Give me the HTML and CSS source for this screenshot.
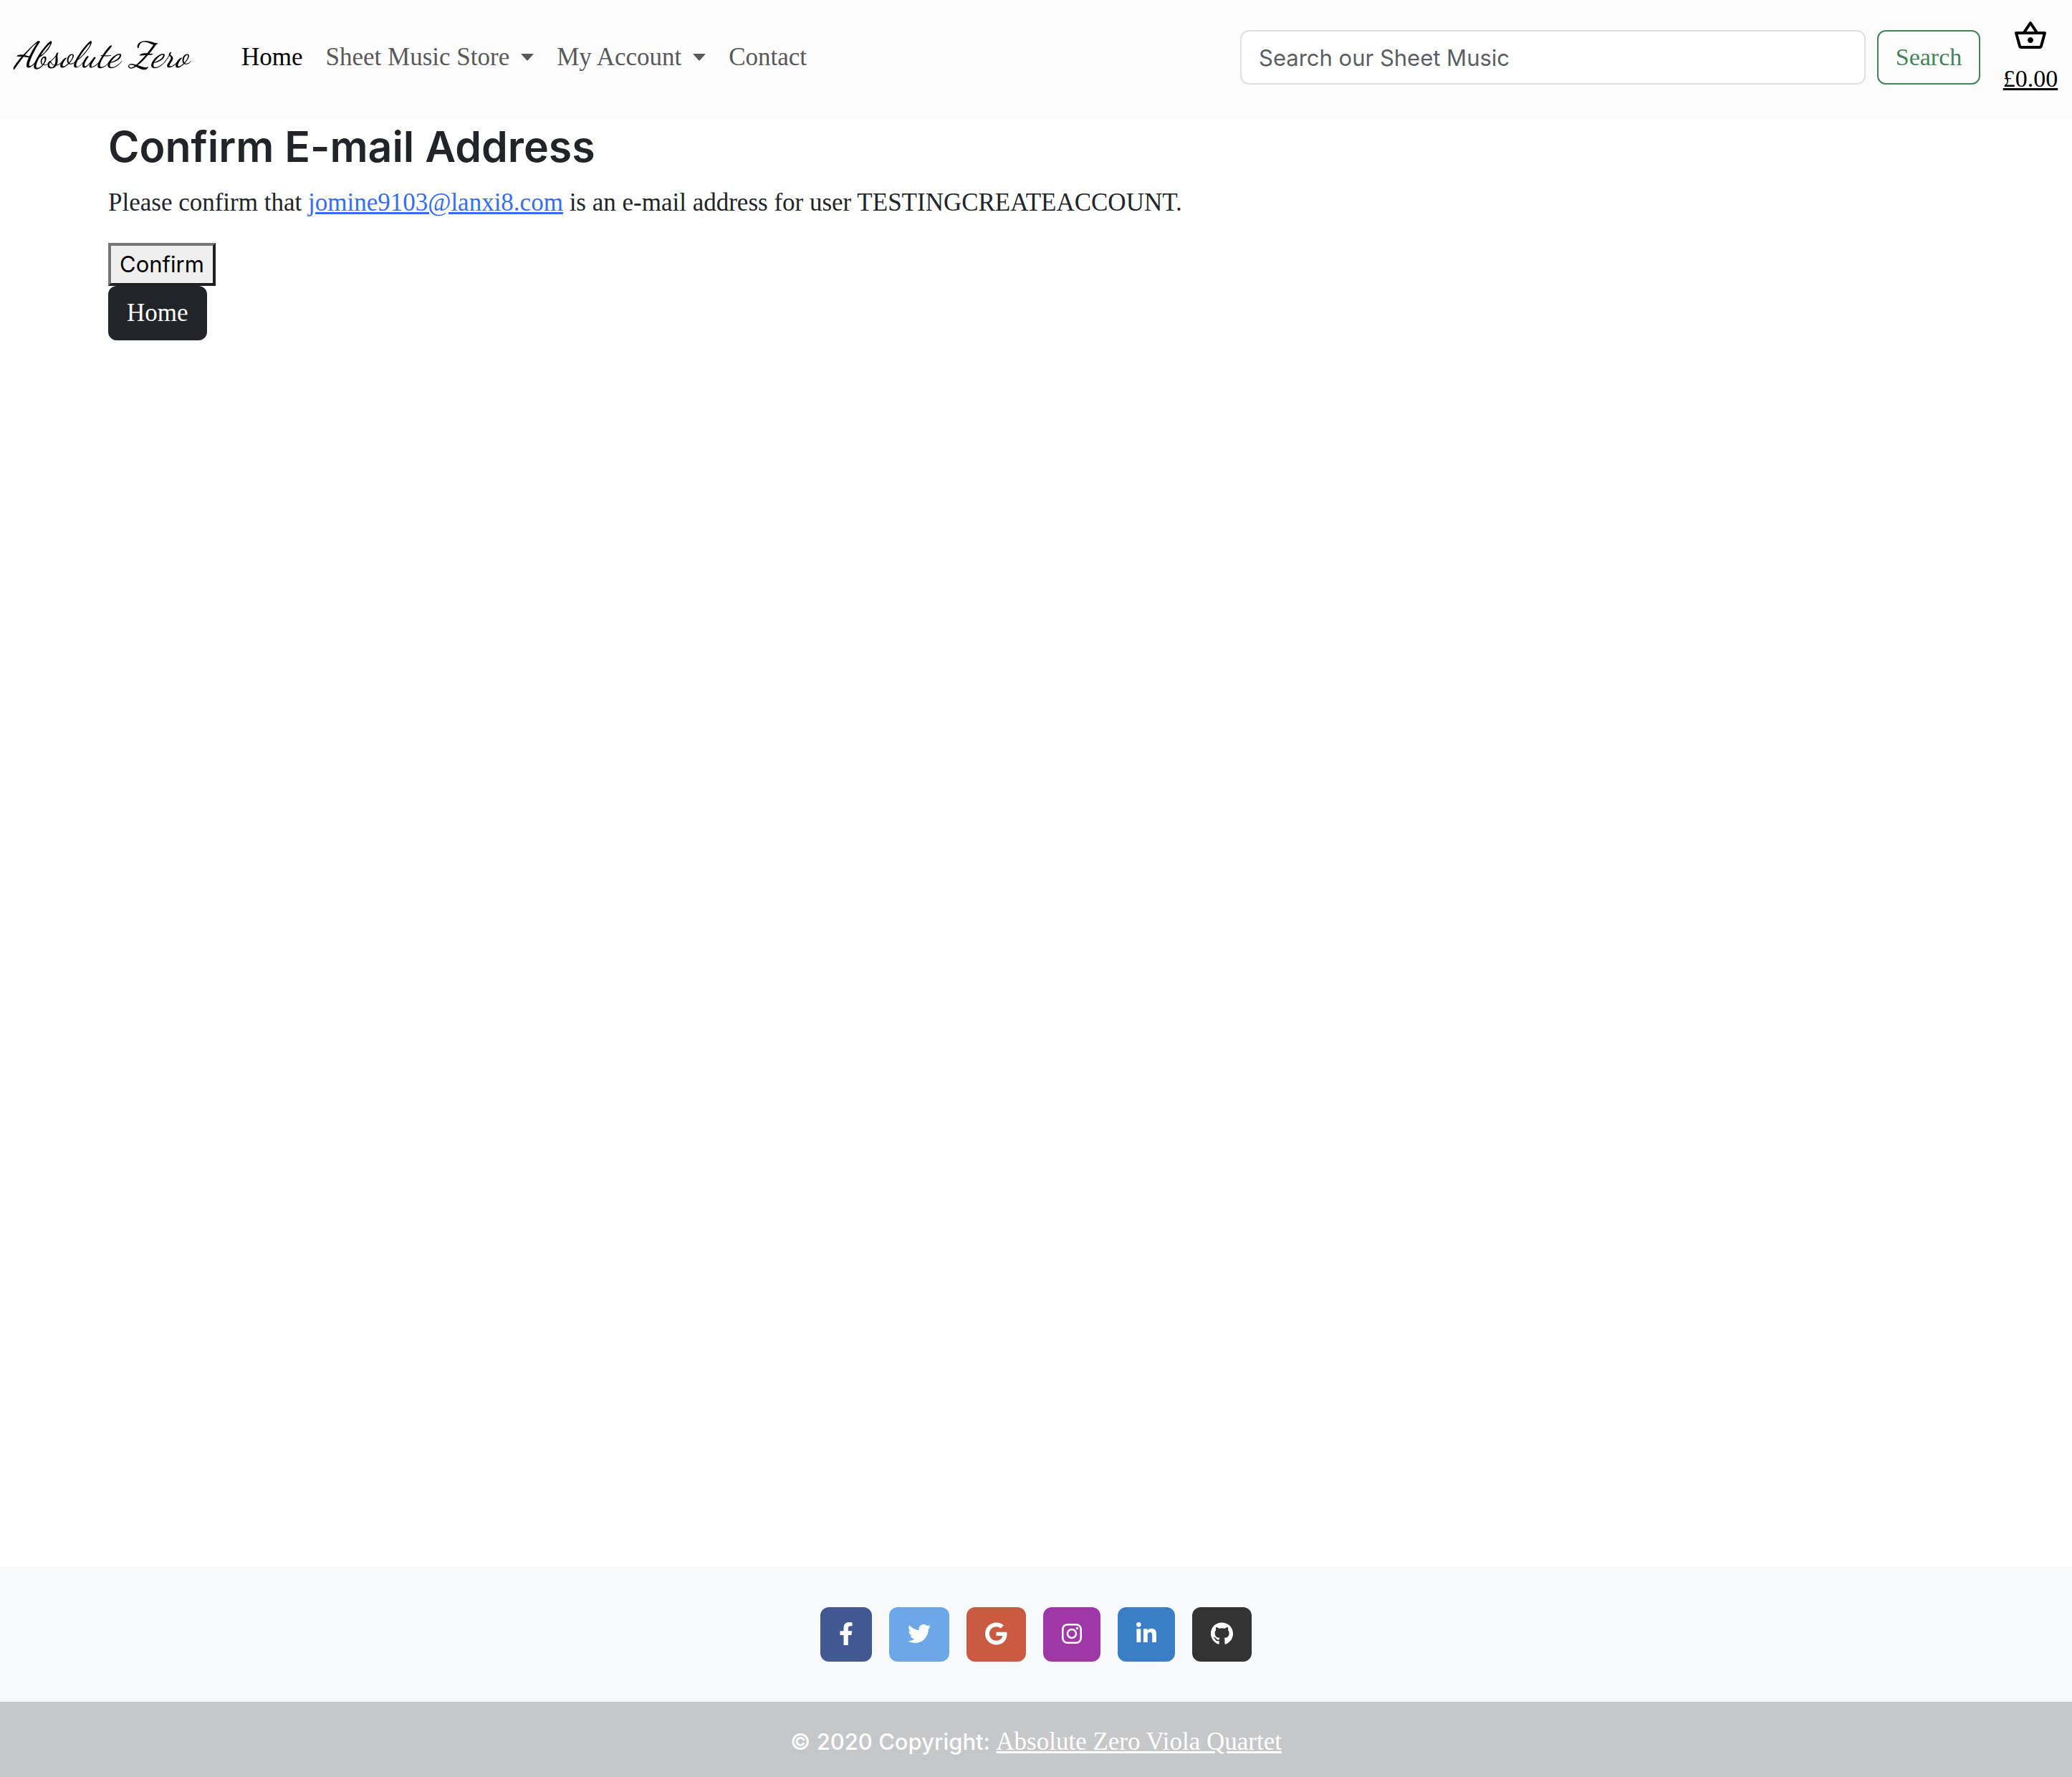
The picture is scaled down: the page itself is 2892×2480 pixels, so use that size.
FILE: index.html
```html
<!DOCTYPE html>
<html lang="en">
<head>
<meta charset="utf-8">
<meta name="viewport" content="width=device-width, initial-scale=1">
<title>Absolute Zero - Confirm E-mail Address</title>
<link rel="stylesheet" href="styles.css">
</head>
<body>
<header class="navbar">
  <a class="brand" href="#">Absolute Zero</a>
  <nav class="nav-main" aria-label="Main">
    <ul class="nav-list">
      <li><a class="nav-link active" href="#">Home</a></li>
      <li><a class="nav-link dropdown" href="#">Sheet Music Store</a></li>
      <li><a class="nav-link dropdown" href="#">My Account</a></li>
      <li><a class="nav-link" href="#">Contact</a></li>
    </ul>
  </nav>
  <form class="search-form">
    <input class="search-input" type="search" placeholder="Search our Sheet Music" aria-label="Search our Sheet Music">
    <button class="btn btn-search" type="submit">Search</button>
  </form>
  <a class="basket" href="#">
    <svg class="basket-icon" viewBox="0 0 24 24" aria-hidden="true"><path d="M22 9h-4.79l-4.38-6.56c-.19-.28-.51-.42-.83-.42s-.64.14-.83.43L6.79 9H2c-.55 0-1 .45-1 1 0 .09.01.18.04.27l2.54 9.27c.23.84 1 1.46 1.92 1.46h13c.92 0 1.69-.62 1.93-1.46l2.54-9.27L23 10c0-.55-.45-1-1-1zM12 4.8L14.8 9H9.2L12 4.8zM18.5 19l-12.99.01L3.31 11H20.7l-2.2 8zM12 13c-1.1 0-2 .9-2 2s.9 2 2 2 2-.9 2-2-.9-2-2-2z"/></svg>
    <span class="basket-total">£0.00</span>
  </a>
</header>

<main class="content">
  <h1 class="title">Confirm E-mail Address</h1>
  <p class="message">Please confirm that <a class="mail" href="mailto:jomine9103@lanxi8.com">jomine9103@lanxi8.com</a> is an e-mail address for user TESTINGCREATEACCOUNT.</p>
  <form><button class="confirm" type="submit">Confirm</button></form>
  <a class="btn btn-home" href="#">Home</a>
</main>

<footer>
  <div class="social">
    <a class="btn social-btn facebook" href="#" aria-label="Facebook"><svg viewBox="0 0 320 512"><path d="M279.14 288l14.22-92.66h-88.91v-60.13c0-25.35 12.42-50.06 52.24-50.06h40.42V6.26S260.43 0 225.36 0c-73.22 0-121.08 44.38-121.08 124.72v70.62H22.89V288h81.39v224h100.17V288z"/></svg></a>
    <a class="btn social-btn twitter" href="#" aria-label="Twitter"><svg viewBox="0 0 512 512"><path d="M459.37 151.716c.325 4.548.325 9.097.325 13.645 0 138.72-105.583 298.558-298.558 298.558-59.452 0-114.68-17.219-161.137-47.106 8.447.974 16.568 1.299 25.34 1.299 49.055 0 94.213-16.568 130.274-44.832-46.132-.975-84.792-31.188-98.112-72.772 6.498.974 12.995 1.624 19.818 1.624 9.421 0 18.843-1.3 27.614-3.573-48.081-9.747-84.143-51.98-84.143-102.985v-1.299c13.969 7.797 30.214 12.67 47.431 13.319-28.264-18.843-46.781-51.005-46.781-87.391 0-19.492 5.197-37.36 14.294-52.954 51.655 63.675 129.3 105.258 216.365 109.807-1.624-7.797-2.599-15.918-2.599-24.04 0-57.828 46.782-104.934 104.934-104.934 30.213 0 57.502 12.67 76.67 33.137 23.715-4.548 46.456-13.32 66.599-25.34-7.798 24.366-24.366 44.833-46.132 57.827 21.117-2.273 41.584-8.122 60.426-16.243-14.292 20.791-32.161 39.308-52.628 54.253z"/></svg></a>
    <a class="btn social-btn google" href="#" aria-label="Google"><svg viewBox="0 0 488 512"><path d="M488 261.8C488 403.3 391.1 504 248 504 110.8 504 0 393.2 0 256S110.8 8 248 8c66.8 0 123 24.5 166.3 64.9l-67.5 64.9C258.5 52.6 94.3 116.6 94.3 256c0 86.5 69.1 156.6 153.7 156.6 98.2 0 135-70.4 140.8-106.9H248v-85.3h236.1c2.3 12.7 3.9 24.9 3.9 41.4z"/></svg></a>
    <a class="btn social-btn instagram" href="#" aria-label="Instagram"><svg viewBox="0 0 448 512"><path d="M224.1 141c-63.6 0-114.9 51.3-114.9 114.9s51.3 114.9 114.9 114.9S339 319.5 339 255.9 287.7 141 224.1 141zm0 189.6c-41.1 0-74.7-33.5-74.7-74.7s33.5-74.7 74.7-74.7 74.7 33.5 74.7 74.7-33.6 74.7-74.7 74.7zm146.4-194.3c0 14.9-12 26.8-26.8 26.8-14.9 0-26.8-12-26.8-26.8s12-26.8 26.8-26.8 26.8 12 26.8 26.8zm76.1 27.2c-1.7-35.9-9.9-67.7-36.2-93.9-26.2-26.2-58-34.4-93.9-36.2-37-2.1-147.9-2.1-184.9 0-35.8 1.7-67.6 9.9-93.9 36.1s-34.4 58-36.2 93.9c-2.1 37-2.1 147.9 0 184.9 1.7 35.9 9.9 67.7 36.2 93.9s58 34.4 93.9 36.2c37 2.1 147.9 2.1 184.9 0 35.9-1.7 67.7-9.9 93.9-36.2 26.2-26.2 34.4-58 36.2-93.9 2.1-37 2.1-147.8 0-184.8zM398.8 388c-7.8 19.6-22.9 34.7-42.6 42.6-29.5 11.7-99.5 9-132.1 9s-102.7 2.6-132.1-9c-19.6-7.8-34.7-22.9-42.6-42.6-11.7-29.5-9-99.5-9-132.1s-2.6-102.7 9-132.1c7.8-19.6 22.9-34.7 42.6-42.6 29.5-11.7 99.5-9 132.1-9s102.7-2.6 132.1 9c19.6 7.8 34.7 22.9 42.6 42.6 11.7 29.5 9 99.5 9 132.1s2.7 102.7-9 132.1z"/></svg></a>
    <a class="btn social-btn linkedin" href="#" aria-label="LinkedIn"><svg viewBox="0 0 448 512"><path d="M100.28 448H7.4V148.9h92.88zM53.79 108.1C24.09 108.1 0 83.5 0 53.8a53.79 53.79 0 0 1 107.58 0c0 29.7-24.1 54.3-53.79 54.3zM447.9 448h-92.68V302.4c0-34.7-.7-79.2-48.29-79.2-48.29 0-55.69 37.7-55.69 76.7V448h-92.78V148.9h89.08v40.8h1.3c12.4-23.5 42.69-48.3 87.88-48.3 94 0 111.28 61.9 111.28 142.3V448z"/></svg></a>
    <a class="btn social-btn github" href="#" aria-label="GitHub"><svg viewBox="0 0 496 512"><path d="M165.9 397.4c0 2-2.3 3.6-5.2 3.6-3.3.3-5.6-1.3-5.6-3.6 0-2 2.3-3.6 5.2-3.6 3-.3 5.6 1.3 5.6 3.6zm-31.1-4.5c-.7 2 1.3 4.3 4.3 4.9 2.6 1 5.6 0 6.2-2s-1.3-4.3-4.3-5.2c-2.6-.7-5.5.3-6.2 2.3zm44.2-1.7c-2.9.7-4.9 2.6-4.6 4.9.3 2 2.9 3.3 5.9 2.6 2.9-.7 4.9-2.6 4.6-4.6-.3-1.9-3-3.2-5.9-2.9zM244.8 8C106.1 8 0 113.3 0 252c0 110.9 69.8 205.8 169.5 239.2 12.8 2.3 17.3-5.6 17.3-12.1 0-6.2-.3-40.4-.3-61.4 0 0-70 15-84.7-29.8 0 0-11.4-29.1-27.8-36.6 0 0-22.9-15.7 1.6-15.4 0 0 24.9 2 38.6 25.8 21.9 38.6 58.6 27.5 72.9 20.9 2.3-16 8.8-27.1 16-33.7-55.9-6.2-112.3-14.3-112.3-110.5 0-27.5 7.6-41.3 23.6-58.9-2.6-6.5-11.1-33.3 2.6-67.9 20.9-6.5 69 27 69 27 20-5.6 41.5-8.5 62.8-8.5s42.8 2.9 62.8 8.5c0 0 48.1-33.6 69-27 13.7 34.7 5.2 61.4 2.6 67.9 16 17.7 25.8 31.5 25.8 58.9 0 96.5-58.9 104.2-114.8 110.5 9.2 7.9 17 22.9 17 46.4 0 33.7-.3 75.4-.3 83.6 0 6.5 4.6 14.4 17.3 12.1C428.2 457.8 496 362.9 496 252 496 113.3 383.5 8 244.8 8z"/></svg></a>
  </div>
  <p class="copyright">© 2020 Copyright: <a class="copyright-link" href="#">Absolute Zero Viola Quartet</a></p>
</footer>
</body>
</html>
```
FILE: styles.css
```css
*,
*::before,
*::after {
  box-sizing: border-box;
}

:root {
  --sans: Inter, "Liberation Sans", sans-serif;
  --serif: "Liberation Serif", serif;
}

body {
  display: flex;
  flex-direction: column;
  min-height: 100vh;
  margin: 0;
  background: #fff;
  color: #212529;
  font-family: var(--sans);
  font-size: 31px;
  line-height: 48px;
}

/* Navigation */

.navbar {
  display: flex;
  align-items: center;
  padding: 26px 20px 32px;
  background: #fcfcfc;
}

.brand {
  width: 301px;
  padding-bottom: 6px;
  color: #000;
  font-family: "Dancing Script", "Liberation Serif", cursive;
  font-size: 50px;
  font-style: italic;
  text-decoration: none;
  white-space: nowrap;
}

.nav-main {
  flex: 1;
}

.nav-list {
  display: flex;
  margin: 0;
  padding: 0;
  list-style: none;
}

.nav-link {
  display: flex;
  align-items: center;
  padding: 0 16px;
  color: #595959;
  font-family: var(--serif);
  font-size: 35px;
  text-decoration: none;
  white-space: nowrap;
}

.nav-link.active {
  color: #000;
}

.dropdown::after {
  content: "";
  margin-left: 16px;
  border-top: 10px solid;
  border-right: 9px solid transparent;
  border-left: 9px solid transparent;
}

.search-form {
  display: flex;
  flex: 0 1 1033px;
  gap: 16px;
  margin-right: 32px;
}

.search-input {
  flex: 1;
  min-width: 0;
  height: 76px;
  padding: 12px 24px;
  border: 2px solid #dee2e6;
  border-radius: 12px;
  background: #fff;
  color: #212529;
  font-family: var(--sans);
  font-size: 31px;
}

.search-input::placeholder {
  color: #5b5f63;
  opacity: 1;
}

.btn {
  display: inline-block;
  height: 76px;
  padding: 12px 24px;
  border: 2px solid transparent;
  border-radius: 12px;
  font-family: var(--serif);
  font-size: 35px;
  line-height: 48px;
  text-decoration: none;
}

.btn-search {
  width: 144px;
  padding: 12px 16px;
  border-color: #408558;
  background: transparent;
  color: #408558;
  font-size: 34px;
}

.basket {
  display: flex;
  flex-direction: column;
  align-items: center;
  gap: 12px;
  width: 76px;
  color: #000;
  font-family: var(--serif);
  font-size: 34px;
}

.basket-icon {
  width: 48px;
  height: 48px;
}

/* Page content */

.content {
  flex: 1;
  padding: 0 151px;
}

.title {
  margin: 0 0 16px;
  font-size: 59px;
  font-weight: 600;
  line-height: 77px;
}

.message {
  margin: 0 0 32px;
  font-family: var(--serif);
  font-size: 35px;
}

.mail {
  color: #346df6;
}

.confirm {
  display: block;
  height: 60px;
  padding: 2px 12px;
  border: 4px solid;
  border-color: #767676 #212121 #212121 #767676;
  background: #efefef;
  color: #000;
  font-family: var(--sans);
  font-size: 31px;
  line-height: 48px;
}

.btn-home {
  background: #212529;
  color: #fff;
}

/* Footer */

.social {
  display: flex;
  justify-content: center;
  gap: 24px;
  padding: 56px 32px;
  background: #f8f9fb;
}

.social-btn {
  padding: 19px 24px;
}

.social-btn svg {
  display: block;
  height: 32px;
  fill: #fff;
}

.facebook {
  background: #425893;
}

.twitter {
  background: #6ca8e8;
}

.google {
  background: #cb5a42;
}

.instagram {
  background: #9f38a7;
}

.linkedin {
  background: #3a7ec5;
}

.github {
  background: #333;
}

.copyright {
  margin: 0;
  padding: 32px 32px 25px;
  background: #c6c7c9;
  color: #fff;
  font-weight: 500;
  text-align: center;
}

.copyright-link {
  color: #fff;
  font-family: var(--serif);
  font-size: 35px;
  font-weight: 400;
}
```
